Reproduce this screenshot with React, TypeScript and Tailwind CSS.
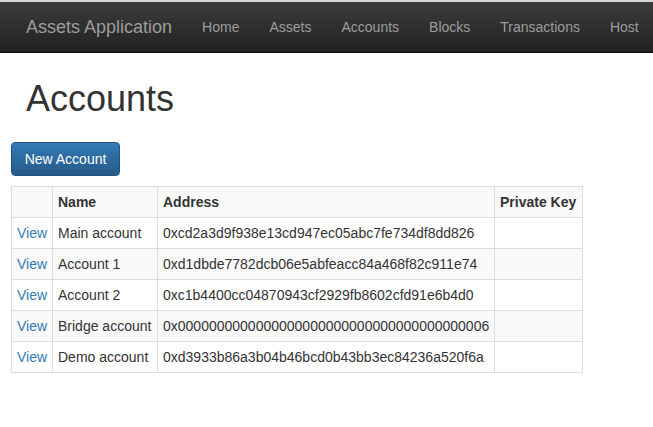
import React from "react";

const rows = [
  ["Main account", "0xcd2a3d9f938e13cd947ec05abc7fe734df8dd826"],
  ["Account 1", "0xd1dbde7782dcb06e5abfeacc84a468f82c911e74"],
  ["Account 2", "0xc1b4400cc04870943cf2929fb8602cfd91e6b4d0"],
  ["Bridge account", "0x0000000000000000000000000000000000000006"],
  ["Demo account", "0xd3933b86a3b04b46bcd0b43bb3ec84236a520f6a"],
];

export default function App() {
  const navLinks = ["Home", "Assets", "Accounts", "Blocks", "Transactions", "Host"];
  return (
    <div className="min-h-[427px] bg-white text-[14px] leading-[20px] text-[#333]" style={{ fontFamily: '"Liberation Sans", Arial, sans-serif' }}>
      <div className="h-[2px] bg-[#d8d8d8]" />
      <nav className="flex h-[51px] items-center overflow-hidden whitespace-nowrap border-b border-[#080808] bg-gradient-to-b from-[#3c3c3c] to-[#222]">
        <div className="flex items-center pl-[11px]">
          <span className="px-[15px] text-[18px] text-[#9d9d9d]">Assets Application</span>
          {navLinks.map((l) => (
            <span key={l} className="px-[15px] text-[14px] text-[#9d9d9d]">
              {l}
            </span>
          ))}
        </div>
      </nav>
      <div className="px-[11px]">
        <h1 className="mt-[26px] mb-[23px] pl-[15px] text-[36px] font-normal leading-[40px] text-[#333]">Accounts</h1>
        <button className="h-[34px] w-[109px] rounded-[4px] border border-[#245580] bg-gradient-to-b from-[#337ab7] to-[#265a88] px-[12px] text-[14px] text-white">
          New Account
        </button>
        <table className="mt-[10px] table-fixed border-collapse w-[571px]">
          <colgroup>
            <col className="w-[41px]" />
            <col className="w-[105px]" />
            <col className="w-[337px]" />
            <col className="w-[88px]" />
          </colgroup>
          <tbody>
            <tr className="bg-[#f9f9f9] font-bold">
              <td className="border border-[#ddd] px-[5px] py-[5px]"></td>
              <td className="border border-[#ddd] px-[5px] py-[5px]">Name</td>
              <td className="border border-[#ddd] px-[5px] py-[5px]">Address</td>
              <td className="border border-[#ddd] px-[5px] py-[5px] whitespace-nowrap">Private Key</td>
            </tr>
            {rows.map(([name, addr], i) => (
              <tr key={name} className={i % 2 === 1 ? "bg-[#f9f9f9]" : "bg-white"}>
                <td className="border border-[#ddd] px-[5px] py-[5px] text-[#337ab7]">View</td>
                <td className="border border-[#ddd] px-[5px] py-[5px] whitespace-nowrap">{name}</td>
                <td className="border border-[#ddd] px-[5px] py-[5px] whitespace-nowrap">{addr}</td>
                <td className="border border-[#ddd] px-[5px] py-[5px]"></td>
              </tr>
            ))}
          </tbody>
        </table>
      </div>
    </div>
  );
}
